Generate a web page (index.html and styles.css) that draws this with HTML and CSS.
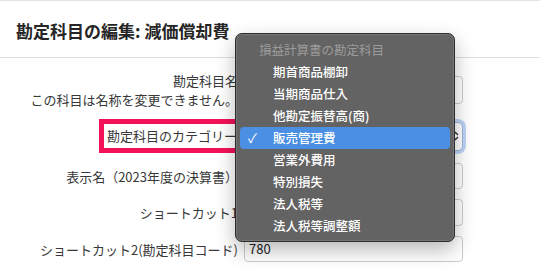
FILE: index.html
```html
<!DOCTYPE html>
<html lang="ja">
<head>
<meta charset="utf-8">
<link rel="stylesheet" href="styles.css">
</head>
<body>
<div class="page">
  <header class="head">
    <h1 class="title">勘定科目の編集: 減価償却費</h1>
  </header>
  <div class="form">
    <div class="label two">勘定科目名<br>この科目は名称を変更できません。</div>
    <div class="field input tall"></div>

    <div class="label"><span class="mark">勘定科目のカテゴリー</span></div>
    <div class="field select">
      <svg class="chev" width="7" height="10" viewBox="0 0 7 10"><path d="M1 4 L3.5 1.5 L6 4 M1 6 L3.5 8.5 L6 6" fill="none" stroke="#333" stroke-width="1.3"/></svg>
    </div>

    <div class="label">表示名（2023年度の決算書）</div>
    <div class="field input"></div>

    <div class="label">ショートカット1</div>
    <div class="field input mid"></div>

    <div class="label">ショートカット2(勘定科目コード)</div>
    <div class="field input">780</div>
  </div>

  <div class="menu">
    <div class="mrow group">損益計算書の勘定科目</div>
    <div class="mrow item">期首商品棚卸</div>
    <div class="mrow item">当期商品仕入</div>
    <div class="mrow item">他勘定振替高(商)</div>
    <div class="mrow item selected"><span class="check">✓</span>販売管理費</div>
    <div class="mrow item">営業外費用</div>
    <div class="mrow item">特別損失</div>
    <div class="mrow item">法人税等</div>
    <div class="mrow item">法人税等調整額</div>
  </div>
</div>
</body>
</html>
```
FILE: styles.css
```css
html, body {
  margin: 0;
  padding: 0;
  background: #ffffff;
}
body {
  font-family: "Noto Sans CJK JP", "Noto Sans", sans-serif;
  color: #333333;
}
.page {
  position: relative;
  width: 540px;
  height: 268px;
  overflow: hidden;
  border-top: 1px solid #e3e3e3;
  box-sizing: border-box;
}
.head {
  height: 56px;
  border-bottom: 1px solid #dedede;
  display: flex;
  align-items: center;
  padding-left: 16px;
}
.title {
  margin: 0;
  font-size: 17px;
  font-weight: 700;
  color: #262626;
  padding-top: 2px;
}
.form {
  display: grid;
  grid-template-columns: 238px 219px;
  column-gap: 6px;
  row-gap: 10px;
  padding-top: 13px;
  align-items: center;
}
.label {
  text-align: right;
  font-size: 13px;
  line-height: 19px;
  color: #383838;
  white-space: nowrap;
}
.mark {
  display: inline-block;
  border: 5px solid #f2125a;
  padding: 0 8px 0 3px;
  line-height: 24px;
  margin-right: -12px;
  text-align: left;
}
.field {
  box-sizing: border-box;
  height: 26px;
  border: 1px solid #cdcdcd;
  border-radius: 4px;
  background: #ffffff;
  font-size: 13px;
  line-height: 24px;
  padding-left: 4px;
  color: #222222;
}
.field.tall {
  height: 28px;
}
.field.mid {
  height: 27px;
}
.select {
  height: 29px;
  border-color: #9fb8de;
  border-radius: 5px;
  box-shadow: 0 0 0 3px rgba(110, 160, 235, 0.45);
  display: flex;
  align-items: center;
  justify-content: flex-end;
  padding-right: 3px;
}
.menu {
  position: absolute;
  left: 235px;
  top: 32px;
  width: 220px;
  height: 209px;
  box-sizing: border-box;
  background: #636363;
  border: 1px solid #2c2c2c;
  border-radius: 7px;
  box-shadow: inset 0 0 0 1px #767676, 0 8px 20px rgba(0, 0, 0, 0.28);
  padding: 5px 4px;
}
.mrow {
  height: 22px;
  line-height: 22px;
  font-size: 12.5px;
  border-radius: 4px;
  white-space: nowrap;
  position: relative;
}
.group {
  color: #9c9c9c;
  padding-left: 19px;
}
.item {
  color: #ffffff;
  font-weight: 500;
  padding-left: 33px;
}
.selected {
  background: #4b8fe3;
}
.check {
  position: absolute;
  left: 8px;
  top: 0;
  font-size: 13px;
  font-weight: 400;
}
```
